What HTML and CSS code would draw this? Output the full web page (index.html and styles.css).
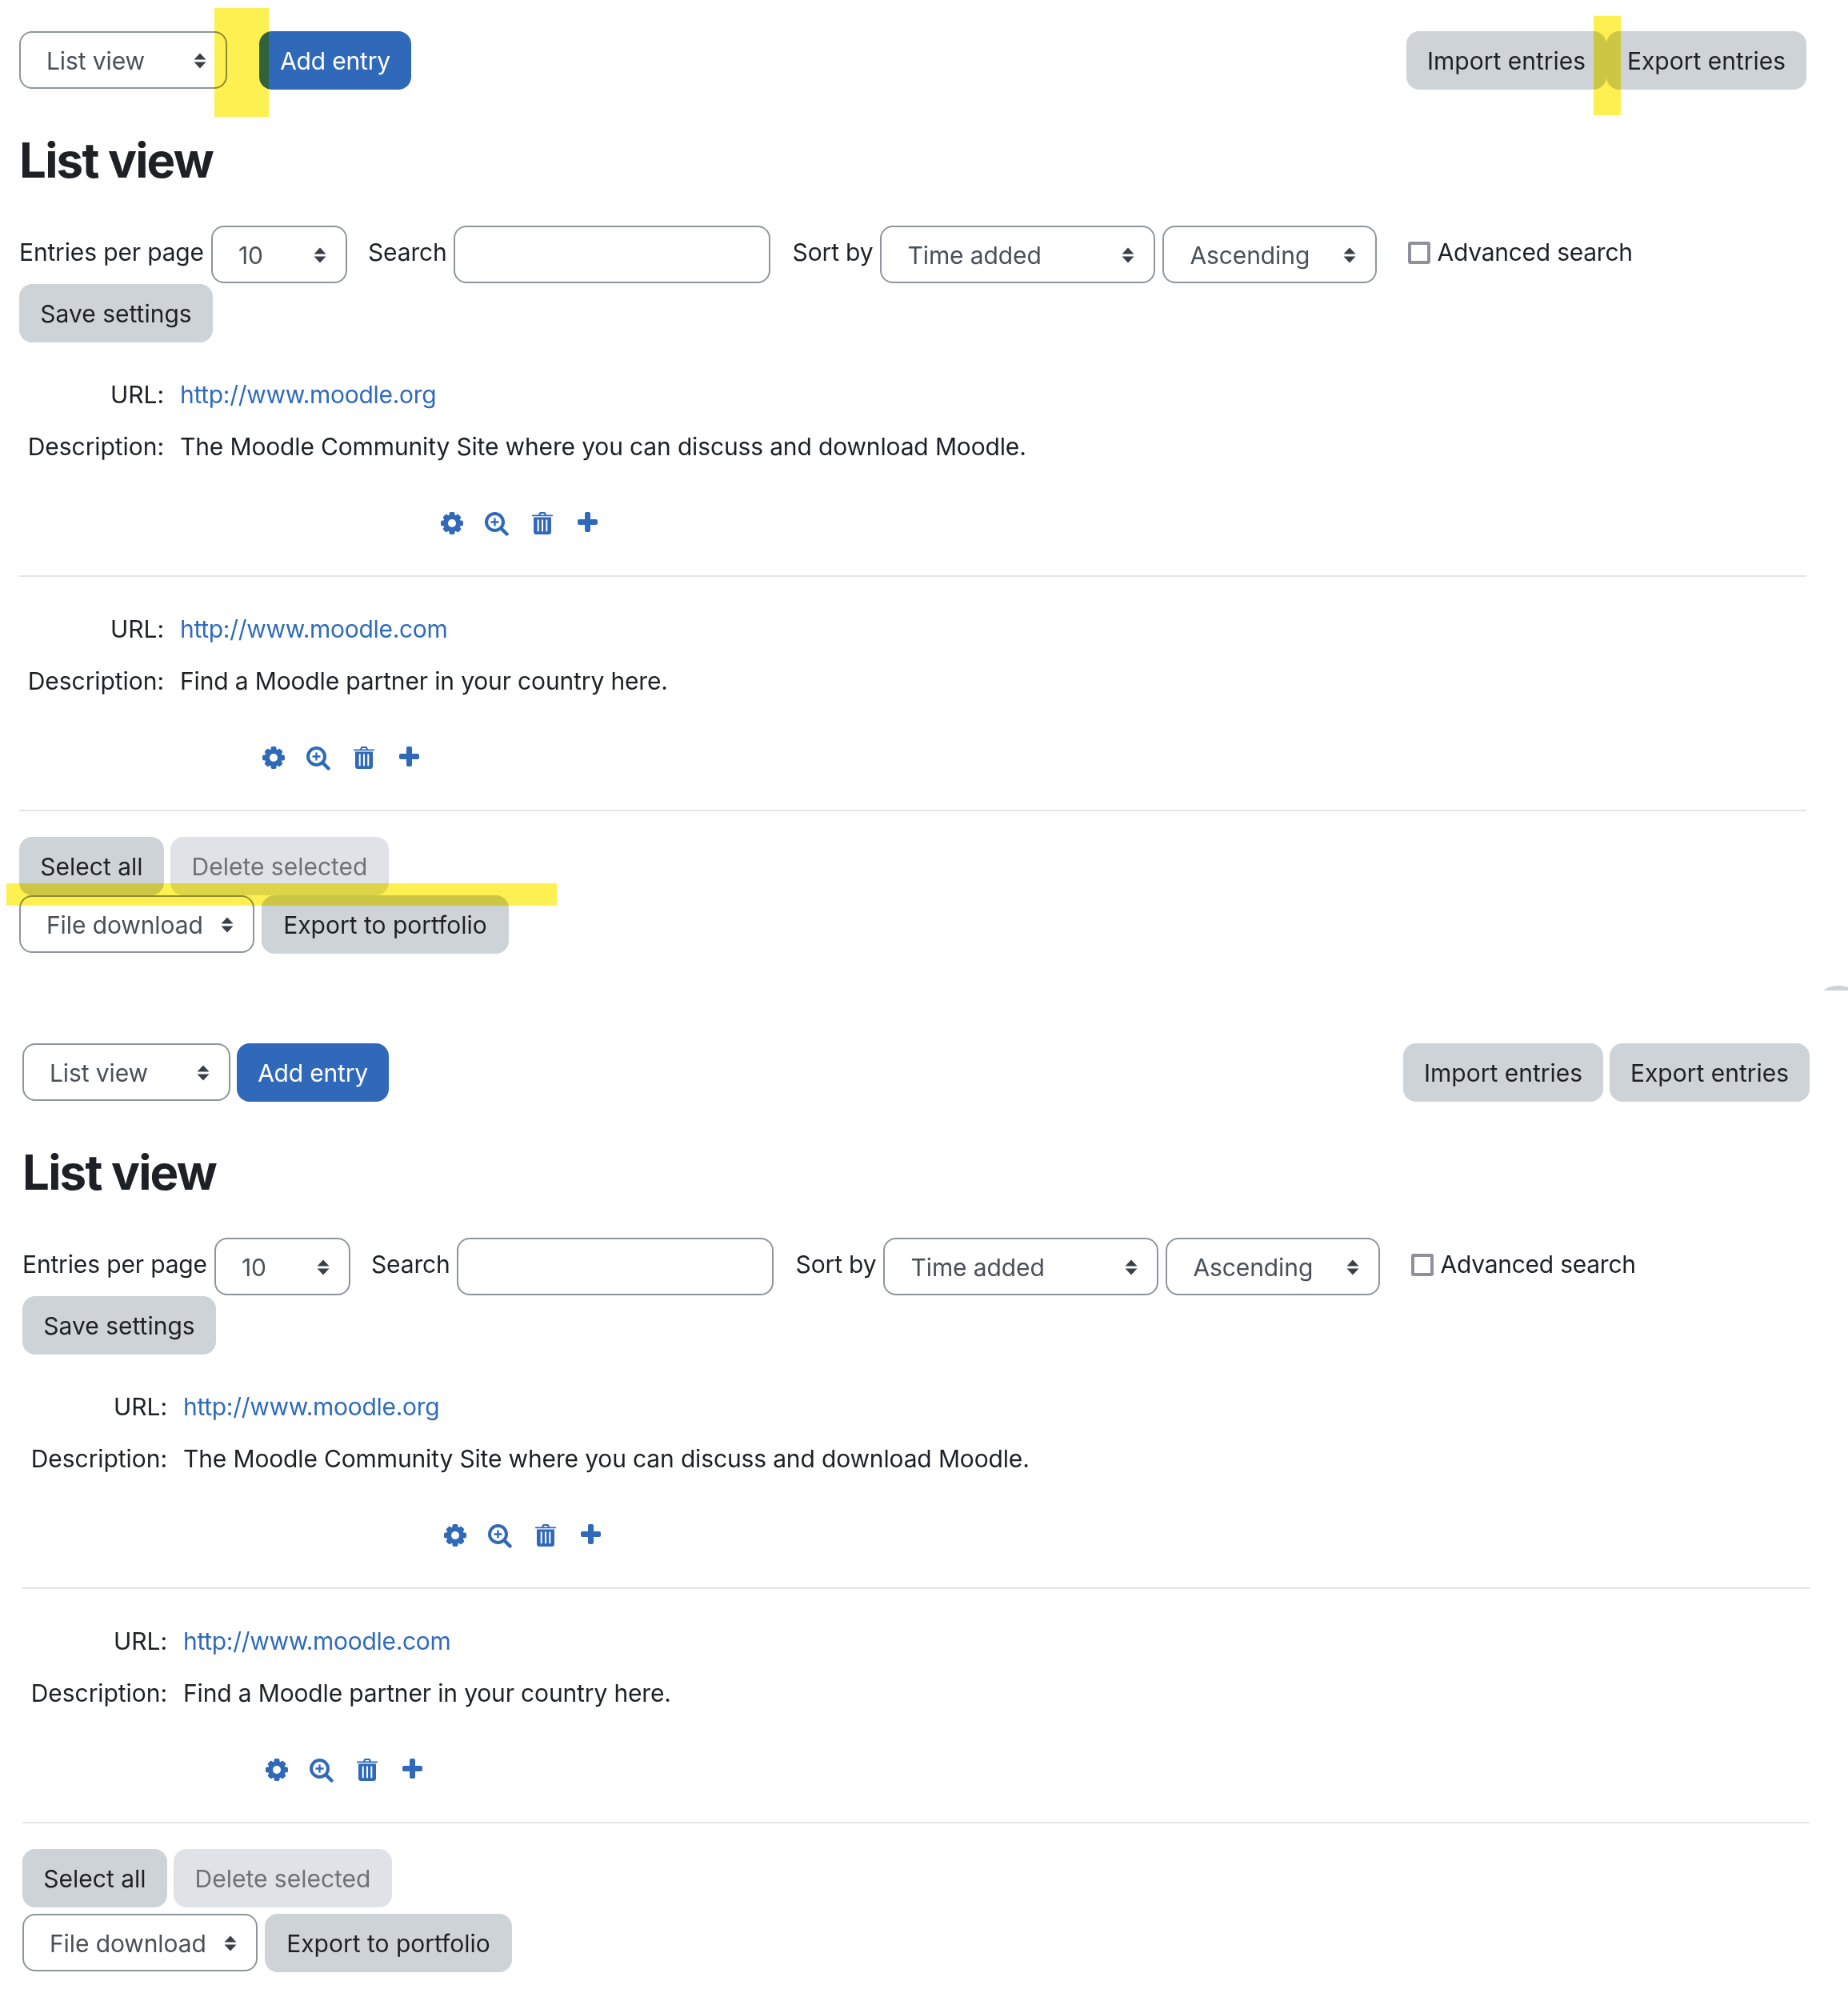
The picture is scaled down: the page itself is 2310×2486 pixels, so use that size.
FILE: index.html
```html
<!DOCTYPE html>
<html lang="en">
<head>
<meta charset="utf-8">
<title>List view</title>
<link rel="stylesheet" href="styles.css">
</head>
<body>
<svg class="defs" width="0" height="0" aria-hidden="true">
  <symbol id="arrows" viewBox="0 0 16 20"><path d="M8 0.5 15.5 8.5H0.5ZM8 19.5 0.5 11.5H15.5Z"/></symbol>
  <symbol id="gear" viewBox="0 0 28 28">
    <circle cx="14" cy="14" r="10.8"/>
    <g>
      <rect x="10.500" y="0" width="7" height="28" rx="2"/>
      <rect x="0" y="10.500" width="28" height="7" rx="2"/>
      <rect x="10.500" y="0.500" width="7" height="27" rx="2" transform="rotate(45 14 14)"/>
      <rect x="10.500" y="0.500" width="7" height="27" rx="2" transform="rotate(-45 14 14)"/>
    </g>
    <circle cx="14" cy="14" r="5" fill="#fff"/>
  </symbol>
  <symbol id="zoom" viewBox="0 0 30 30">
    <circle cx="12.5" cy="12.5" r="10.5" fill="none" stroke="currentColor" stroke-width="4"/>
    <path d="M12.5 7.5v10M7.5 12.5h10" fill="none" stroke="currentColor" stroke-width="2.4"/>
    <path d="M20.5 20.5 27.5 27.5" fill="none" stroke="currentColor" stroke-width="4.4" stroke-linecap="round"/>
  </symbol>
  <symbol id="trash" viewBox="0 0 26 28">
    <path fill-rule="evenodd" d="M8 3.6 9 1.2C9.3.5 9.9 0 10.6 0h4.8c.7 0 1.3.5 1.6 1.2l1 2.4h6.9c.6 0 1.1.4 1.1.9v.7H0v-.7c0-.5.5-.9 1.1-.9ZM10.300 3.600h5.400L15 1.900h-4ZM2 6.500h22v18.300c0 1.800-1.200 3.200-2.800 3.200H4.800C3.200 28 2 26.600 2 24.800ZM6.700 9.500v14.800h2V9.500ZM12 9.500v14.800h2V9.500ZM17.300 9.500v14.800h2V9.500Z"/>
  </symbol>
  <symbol id="plus" viewBox="0 0 25 25"><path d="M9 2c0-1.100.9-2 2-2h3c1.100 0 2 .9 2 2v7h7c1.100 0 2 .9 2 2v3c0 1.100-.9 2-2 2h-7v7c0 1.100-.9 2-2 2h-3c-1.100 0-2-.9-2-2v-7H2c-1.100 0-2-.9-2-2v-3c0-1.100.9-2 2-2h7Z"/></symbol>
</svg>

<main class="page">
  <section class="panel panel-first">
    <div class="topbar">
      <div class="group group-wide">
        <span class="select w-view">List view<svg class="caret"><use href="#arrows"/></svg></span>
        <a class="btn btn-primary w-add">Add entry</a>
      </div>
      <div class="group group-tight">
        <a class="btn btn-secondary w-import">Import entries</a>
        <a class="btn btn-secondary w-export">Export entries</a>
      </div>
    </div>
    <h2 class="title">List view</h2>
    <form class="filters">
      <div class="field field-perpage"><label class="lbl">Entries per page</label><span class="select w-perpage">10<svg class="caret"><use href="#arrows"/></svg></span></div>
      <div class="field field-search"><label class="lbl">Search</label><span class="input w-search"></span></div>
      <div class="field"><label class="lbl">Sort by</label><span class="select w-sort">Time added<svg class="caret"><use href="#arrows"/></svg></span><span class="select w-order">Ascending<svg class="caret"><use href="#arrows"/></svg></span></div>
      <div class="field field-check"><span class="check"></span><label class="lbl">Advanced search</label></div>
    </form>
    <a class="btn btn-secondary w-save">Save settings</a>

    <div class="entries">
      <article class="entry">
        <table class="entry-table">
          <tr><th>URL:</th><td><a class="link">http://www.moodle.org</a></td></tr>
          <tr><th>Description:</th><td>The Moodle Community Site where you can discuss and download Moodle.</td></tr>
          <tr><td colspan="2" class="actions a-one"><svg class="ic ic-gear"><use href="#gear"/></svg><svg class="ic ic-zoom"><use href="#zoom"/></svg><svg class="ic ic-trash"><use href="#trash"/></svg><svg class="ic ic-plus"><use href="#plus"/></svg></td></tr>
        </table>
      </article>
      <article class="entry">
        <table class="entry-table">
          <tr><th>URL:</th><td><a class="link">http://www.moodle.com</a></td></tr>
          <tr><th>Description:</th><td>Find a Moodle partner in your country here.</td></tr>
          <tr><td colspan="2" class="actions a-two"><svg class="ic ic-gear"><use href="#gear"/></svg><svg class="ic ic-zoom"><use href="#zoom"/></svg><svg class="ic ic-trash"><use href="#trash"/></svg><svg class="ic ic-plus"><use href="#plus"/></svg></td></tr>
        </table>
      </article>
    </div>

    <div class="bulk">
      <a class="btn btn-secondary w-all">Select all</a>
      <a class="btn btn-disabled w-del">Delete selected</a>
    </div>
    <div class="bulk">
      <span class="select w-file">File download<svg class="caret"><use href="#arrows"/></svg></span>
      <a class="btn btn-secondary w-port">Export to portfolio</a>
    </div>
  </section>

  <section class="panel panel-second">
    <div class="topbar">
      <div class="group">
        <span class="select w-view">List view<svg class="caret"><use href="#arrows"/></svg></span>
        <a class="btn btn-primary w-add">Add entry</a>
      </div>
      <div class="group">
        <a class="btn btn-secondary w-import">Import entries</a>
        <a class="btn btn-secondary w-export">Export entries</a>
      </div>
    </div>
    <h2 class="title">List view</h2>
    <form class="filters">
      <div class="field field-perpage"><label class="lbl">Entries per page</label><span class="select w-perpage">10<svg class="caret"><use href="#arrows"/></svg></span></div>
      <div class="field field-search"><label class="lbl">Search</label><span class="input w-search"></span></div>
      <div class="field"><label class="lbl">Sort by</label><span class="select w-sort">Time added<svg class="caret"><use href="#arrows"/></svg></span><span class="select w-order">Ascending<svg class="caret"><use href="#arrows"/></svg></span></div>
      <div class="field field-check"><span class="check"></span><label class="lbl">Advanced search</label></div>
    </form>
    <a class="btn btn-secondary w-save">Save settings</a>

    <div class="entries">
      <article class="entry">
        <table class="entry-table">
          <tr><th>URL:</th><td><a class="link">http://www.moodle.org</a></td></tr>
          <tr><th>Description:</th><td>The Moodle Community Site where you can discuss and download Moodle.</td></tr>
          <tr><td colspan="2" class="actions a-one"><svg class="ic ic-gear"><use href="#gear"/></svg><svg class="ic ic-zoom"><use href="#zoom"/></svg><svg class="ic ic-trash"><use href="#trash"/></svg><svg class="ic ic-plus"><use href="#plus"/></svg></td></tr>
        </table>
      </article>
      <article class="entry">
        <table class="entry-table">
          <tr><th>URL:</th><td><a class="link">http://www.moodle.com</a></td></tr>
          <tr><th>Description:</th><td>Find a Moodle partner in your country here.</td></tr>
          <tr><td colspan="2" class="actions a-two"><svg class="ic ic-gear"><use href="#gear"/></svg><svg class="ic ic-zoom"><use href="#zoom"/></svg><svg class="ic ic-trash"><use href="#trash"/></svg><svg class="ic ic-plus"><use href="#plus"/></svg></td></tr>
        </table>
      </article>
    </div>

    <div class="bulk">
      <a class="btn btn-secondary w-all">Select all</a>
      <a class="btn btn-disabled w-del">Delete selected</a>
    </div>
    <div class="bulk bulk-spaced">
      <span class="select w-file">File download<svg class="caret"><use href="#arrows"/></svg></span>
      <a class="btn btn-secondary w-port">Export to portfolio</a>
    </div>
  </section>

  <div class="mark mark-a"></div>
  <div class="mark mark-b"></div>
  <div class="mark mark-c"></div>
  <div class="arc"></div>
</main>
</body>
</html>
```

FILE: styles.css
```css
* { box-sizing: border-box; }
html, body { margin: 0; padding: 0; background: #fff; }
body {
  font-family: Inter, "Noto Sans", "Liberation Sans", sans-serif;
  font-size: 30px;
  line-height: 45px;
  color: #1d2125;
  letter-spacing: -0.2px;
}
.defs { position: absolute; }
.page { position: relative; width: 2310px; height: 2486px; overflow: hidden; }
.panel { width: 2234px; }
.panel-first { margin-left: 24px; padding-top: 39px; }
.panel-second { margin-left: 28px; margin-top: 112px; }

.topbar { display: flex; justify-content: space-between; height: 73px; }
.group { display: flex; gap: 8px; }
.group-wide { gap: 40px; }
.group-tight { gap: 0; }

.btn, .select, .input {
  display: flex;
  align-items: center;
  height: 73px;
  border-radius: 16px;
  flex: none;
}
.btn { justify-content: center; padding-top: 2px; letter-spacing: 0; }
.btn-primary { background: #3069b9; color: #fff; letter-spacing: -0.2px; }
.btn-secondary { background: #ced3d8; color: #1d2125; }
.btn-disabled { background: #dfe2e6; color: #6d7278; }

.select, .input {
  position: relative;
  background: #fff;
  border: 2px solid #8f959e;
  color: #495057;
}
.select { padding: 3px 0 0 32px; height: 72px; letter-spacing: -0.1px; }
.input { height: 72px; }
.caret { position: absolute; right: 24px; top: 25px; width: 16px; height: 20px; fill: #3a4046; }

.w-view { width: 260px; }
.w-add { width: 190px; }
.w-import { width: 250px; }
.w-export { width: 250px; }
.w-perpage { width: 170px; }
.w-search { width: 396px; }
.w-sort { width: 344px; }
.w-order { width: 268px; }
.w-save { width: 242px; }
.w-all { width: 181px; }
.w-del { width: 273px; }
.w-file { width: 294px; }
.w-port { width: 309px; }

.title {
  margin: 0;
  padding-top: 48.5px;
  height: 170px;
  font-size: 60px;
  line-height: 78px;
  font-weight: 700;
  letter-spacing: -1.8px;
  color: #1d2125;
}

.filters { display: flex; height: 73px; }
.field { display: flex; gap: 9px; margin-right: 26px; }
.field-perpage { margin-right: 26px; }
.field-search { gap: 8px; margin-right: 28px; }
.field-check { margin-left: 13px; margin-right: 0; gap: 8px; }
.lbl { display: block; line-height: 45px; padding-top: 11px; letter-spacing: -0.15px; }
.field-check .lbl { letter-spacing: -0.25px; }
.check {
  width: 28px;
  height: 28px;
  margin-top: 20px;
  border: 4px solid #8f8f9d;
  border-radius: 3px;
  background: #fff;
}

.entries { padding-top: 33px; }
.entry { border-bottom: 2px solid #e5e5e5; height: 260px; margin-bottom: 33px; }
.entry:last-child { margin-bottom: 32px; }
.entry-table { border-collapse: collapse; }
.entry-table th {
  width: 201px;
  padding: 10px 20px 10px 0;
  text-align: right;
  font-weight: 400;
  letter-spacing: -0.06px;
}
.entry-table td { padding: 10px 0; height: 65px; letter-spacing: -0.15px; }
.link { color: #2f6bbb; letter-spacing: -0.3px; }
.entry-table .actions { height: 128px; padding: 0 0 0 0; vertical-align: top; line-height: 0; }
.a-one { padding-left: 527px !important; }
.a-two { padding-left: 304px !important; }

.ic { display: inline-block; vertical-align: top; color: #2f69b8; fill: #2f69b8; margin-top: 49px; }
.ic-gear { width: 28px; height: 28px; margin-right: 27px; }
.ic-zoom { width: 30px; height: 30px; margin-right: 29px; }
.ic-trash { width: 26px; height: 28px; margin-right: 31px; }
.ic-plus { width: 25px; height: 25px; }

.bulk { display: flex; height: 73px; gap: 8px; }
.bulk-spaced { margin-top: 8px; }
.bulk .w-port { margin-left: 1px; }

.mark { position: absolute; background: #fef050; mix-blend-mode: multiply; }
.mark-a { left: 268px; top: 10px; width: 68px; height: 136px; }
.mark-b { left: 1992px; top: 20px; width: 34px; height: 124px; }
.mark-c { left: 8px; top: 1104px; width: 688px; height: 28px; }

.arc { position: absolute; right: 0; top: 1232px; width: 32px; height: 6px; overflow: hidden; }
.arc::before {
  content: "";
  position: absolute;
  left: 0;
  top: 0;
  width: 40px;
  height: 20px;
  border-radius: 50%;
  background: #ced3d8;
}
```
